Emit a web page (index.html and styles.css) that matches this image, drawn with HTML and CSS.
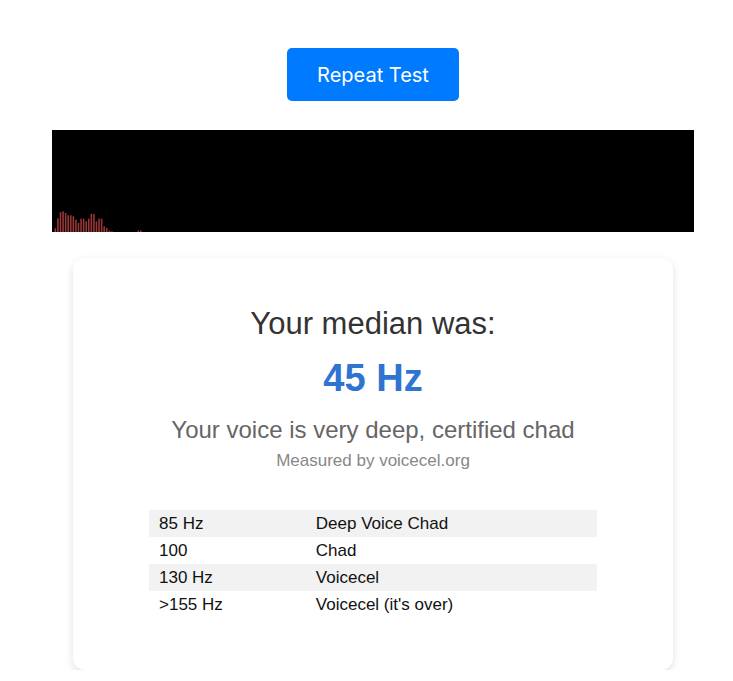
FILE: index.html
```html
<!DOCTYPE html>
<html lang="en">
<head>
<meta charset="utf-8">
<title>Voice Pitch Test</title>
<link rel="stylesheet" href="styles.css">
</head>
<body>
<main class="wrap">
  <div class="actions">
    <button class="btn">Repeat Test</button>
  </div>
  <div class="visualizer">
    <svg class="bars" viewBox="0 0 642 100" width="642" height="100" preserveAspectRatio="none">
      <g fill="#9a3636">
        <rect x="2.57" y="96.3" width="1.57" height="3.7"/>
        <rect x="5.14" y="86.3" width="1.57" height="13.7"/>
        <rect x="7.71" y="80" width="1.57" height="20"/>
        <rect x="10.28" y="79.3" width="1.57" height="20.7"/>
        <rect x="12.85" y="81" width="1.57" height="19"/>
        <rect x="15.42" y="83.3" width="1.57" height="16.7"/>
        <rect x="17.99" y="83.3" width="1.57" height="16.7"/>
        <rect x="20.56" y="84.3" width="1.57" height="15.7"/>
        <rect x="23.13" y="87.7" width="1.57" height="12.3"/>
        <rect x="25.7" y="91" width="1.57" height="9"/>
        <rect x="28.27" y="86.7" width="1.57" height="13.3"/>
        <rect x="30.84" y="86.7" width="1.57" height="13.3"/>
        <rect x="33.41" y="89.3" width="1.57" height="10.7"/>
        <rect x="35.98" y="86.7" width="1.57" height="13.3"/>
        <rect x="38.55" y="81.7" width="1.57" height="18.3"/>
        <rect x="41.12" y="82" width="1.57" height="18"/>
        <rect x="43.69" y="89.3" width="1.57" height="10.7"/>
        <rect x="46.26" y="86.7" width="1.57" height="13.3"/>
        <rect x="48.83" y="86.7" width="1.57" height="13.3"/>
        <rect x="51.4" y="94.3" width="1.57" height="5.7"/>
        <rect x="53.97" y="96" width="1.57" height="4"/>
        <rect x="56.54" y="98.7" width="1.57" height="1.3"/>
        <rect x="59.11" y="99.3" width="1.57" height="0.7"/>
        <rect x="85.5" y="98.5" width="1.57" height="1.5"/>
        <rect x="88.07" y="98.5" width="1.57" height="1.5"/>
      </g>
    </svg>
  </div>
  <section class="card">
    <h2 class="title">Your median was:</h2>
    <div class="value">45 Hz</div>
    <p class="verdict">Your voice is very deep, certified chad</p>
    <p class="credit">Measured by voicecel.org</p>
    <table class="scale">
      <tr><td class="c1">85 Hz</td><td>Deep Voice Chad</td></tr>
      <tr><td class="c1">100</td><td>Chad</td></tr>
      <tr><td class="c1">130 Hz</td><td>Voicecel</td></tr>
      <tr><td class="c1">&gt;155 Hz</td><td>Voicecel (it's over)</td></tr>
    </table>
  </section>
</main>
</body>
</html>
```
FILE: styles.css
```css
html, body {
  margin: 0;
  padding: 0;
  background: #fff;
}
body {
  font-family: "Liberation Sans", Arial, sans-serif;
}
.wrap {
  width: 642px;
  margin-left: 52px;
  padding-top: 48px;
}
.actions {
  display: flex;
  justify-content: center;
}
.btn {
  width: 172px;
  height: 53px;
  border: none;
  border-radius: 5px;
  background: #007bff;
  color: #fff;
  font-family: Inter, "Liberation Sans", sans-serif;
  font-size: 20px;
  cursor: pointer;
}
.visualizer {
  margin-top: 29px;
  height: 102px;
  background: #000;
  display: flex;
  align-items: flex-end;
}
.bars {
  display: block;
  width: 642px;
  height: 100px;
}
.card {
  margin: 26px 21px 0;
  background: #fff;
  border-radius: 12px;
  box-shadow: 0 3px 8px rgba(0, 0, 0, 0.12);
  padding: 20px 20px 52px;
  text-align: center;
}
.title {
  margin: 28px 0 0;
  font-size: 31px;
  line-height: 36px;
  font-weight: normal;
  color: #333;
}
.value {
  margin-top: 14px;
  font-size: 38px;
  line-height: 44px;
  font-weight: bold;
  color: #2f74d0;
}
.verdict {
  margin: 16px 0 0;
  font-size: 24px;
  line-height: 28px;
  color: #666;
}
.credit {
  margin: 7px 0 0;
  font-size: 17px;
  line-height: 20px;
  color: #888;
}
.scale {
  width: 80%;
  margin: 39px auto 0;
  border-collapse: collapse;
  text-align: left;
  font-size: 17px;
  color: #111;
}
.scale td {
  height: 27px;
  padding: 0 10px;
  line-height: 27px;
}
.scale .c1 {
  width: 35%;
}
.scale tr:nth-child(odd) {
  background: #f2f2f2;
}
```
